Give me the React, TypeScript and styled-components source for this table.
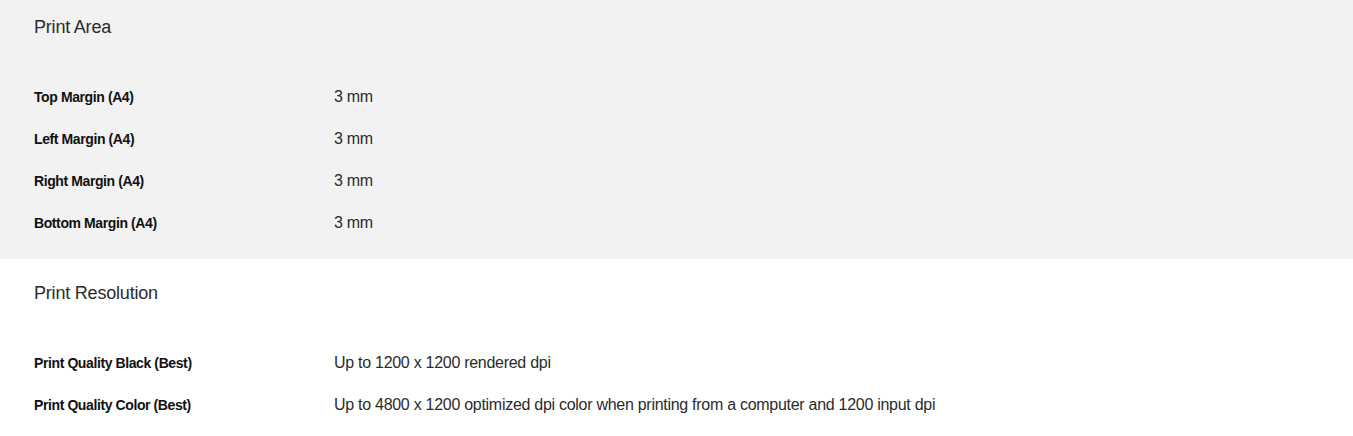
import React from 'react'
import styled, { createGlobalStyle } from 'styled-components'

const GlobalStyle = createGlobalStyle`
  body {
    margin: 0;
    background: #ffffff;
    font-family: "Liberation Sans", Arial, sans-serif;
  }
`

interface Spec {
  label: string
  value: string
}

interface Group {
  title: string
  shaded: boolean
  specs: Spec[]
}

const groups: Group[] = [
  {
    title: 'Print Area',
    shaded: true,
    specs: [
      { label: 'Top Margin (A4)', value: '3 mm' },
      { label: 'Left Margin (A4)', value: '3 mm' },
      { label: 'Right Margin (A4)', value: '3 mm' },
      { label: 'Bottom Margin (A4)', value: '3 mm' }
    ]
  },
  {
    title: 'Print Resolution',
    shaded: false,
    specs: [
      { label: 'Print Quality Black (Best)', value: 'Up to 1200 x 1200 rendered dpi' },
      {
        label: 'Print Quality Color (Best)',
        value: 'Up to 4800 x 1200 optimized dpi color when printing from a computer and 1200 input dpi'
      }
    ]
  }
]

const Section = styled.section<{ $shaded: boolean; $top: number }>`
  background: ${props => (props.$shaded ? '#f2f2f2' : '#ffffff')};
  padding: ${props => props.$top}px 34px 15px;
`

const Title = styled.h2`
  margin: 0;
  font-size: 18px;
  line-height: 22px;
  font-weight: 400;
  color: #2b2b2b;
  letter-spacing: -0.2px;
`

const SpecList = styled.dl`
  margin: 38px 0 0;
`

const Row = styled.div`
  display: grid;
  grid-template-columns: 300px 1fr;
  align-items: center;
  height: 42px;
`

const Label = styled.dt`
  font-size: 14px;
  font-weight: 700;
  color: #111111;
  letter-spacing: -0.4px;
`

const Value = styled.dd`
  margin: 0;
  font-size: 16px;
  color: #2b2b2b;
  letter-spacing: -0.28px;
`

export default function App() {
  return (
    <>
      <GlobalStyle />
      {groups.map((group, i) => (
        <Section key={group.title} $shaded={group.shaded} $top={i === 0 ? 16 : 23}>
          <Title>{group.title}</Title>
          <SpecList>
            {group.specs.map(spec => (
              <Row key={spec.label}>
                <Label>{spec.label}</Label>
                <Value>{spec.value}</Value>
              </Row>
            ))}
          </SpecList>
        </Section>
      ))}
    </>
  )
}
